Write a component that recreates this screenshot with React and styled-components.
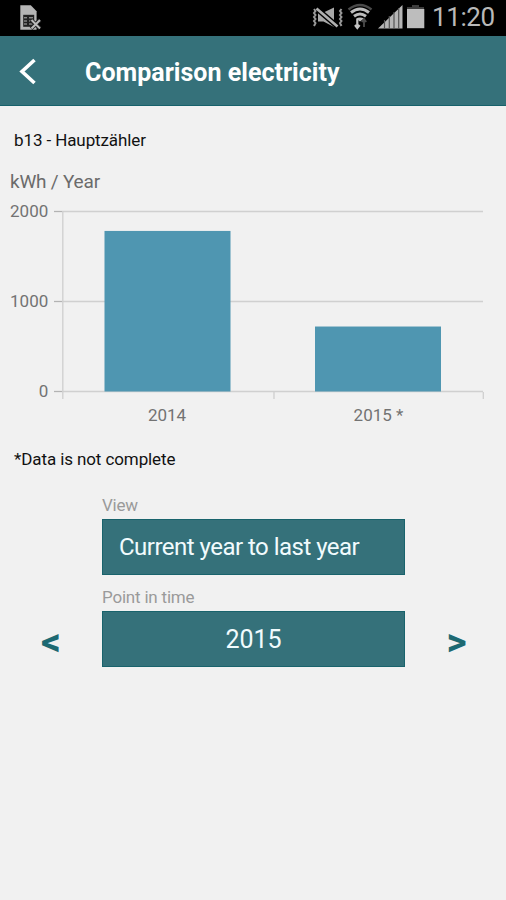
import styled, { createGlobalStyle } from "styled-components"

const GlobalStyle = createGlobalStyle`
* {
  box-sizing: border-box;
}
body {
  margin: 0;
  background: #f1f1f1;
  font-family: Roboto, "Liberation Sans", sans-serif;
}
`
const Container = styled.div`
width: 100%;
min-height: 100vh;
overflow: hidden;
background: #f1f1f1;
`
const StatusBar = styled.div`
height: 36px;
background: #000;
display: flex;
align-items: flex-start;
justify-content: space-between;
padding-right: 12px;
`
const StatusRight = styled.div`
display: flex;
`
const Clock = styled.span`
width: 62px;
color: #b9b9b9;
font-size: 26px;
line-height: 35px;
letter-spacing: -.4px;
white-space: nowrap;
`
const Header = styled.header`
height: 70px;
background: #35717a;
border-bottom: 1px solid #17616b;
display: flex;
align-items: center;
`
const Back = styled.button`
width: 85px;
height: 69px;
padding: 0;
border: none;
background: transparent;
`
const Title = styled.h1`
margin: 5px 0 0;
color: #fff;
font-size: 25px;
font-weight: 700;
line-height: 30px;
letter-spacing: .02px;
`
const Meter = styled.p`
margin: 24px 0 0 14px;
color: #111;
font-size: 17px;
line-height: 20px;
letter-spacing: -.1px;
`
const Unit = styled.p`
margin: 22px 0 0 10px;
color: #6b6b6b;
font-size: 19px;
line-height: 20px;
letter-spacing: -.2px;
`
const Chart = styled.svg`
display: block;
margin-top: 3px;
`
const Label = styled.text`
fill: #737373;
font-size: 17px;
letter-spacing: ${(props) => props.$spacing || "0"};
`
const Note = styled(Meter)`
margin-top: 14px;
`
const Controls = styled.div`
margin-top: 26px;
`
const Field = styled.div`
margin-bottom: 12px;
`
const FieldLabel = styled.div`
margin-left: 102px;
height: 24px;
color: #9a9a9a;
font-size: 17px;
line-height: 20px;
letter-spacing: -.2px;
`
const Row = styled.div`
display: grid;
grid-template-columns: 102px 303px 101px;
`
const Select = styled.button`
grid-column: 2;
height: 56px;
padding: 0 16px;
border: 1px solid #19636c;
background: #35717a;
color: #f1fbfd;
font-family: inherit;
font-size: ${(props) => props.$size};
letter-spacing: ${(props) => props.$spacing || "0"};
text-align: ${(props) => props.$align || "left"};
`
const Arrow = styled.button`
padding: ${(props) => props.$next ? "6px 0 0 2px" : "6px 0 0"};
border: none;
background: transparent;
color: #1d6972;
font-family: inherit;
font-size: 39px;
font-weight: 700;
line-height: 48px;
`

const bars = [
  { label: "2014", value: 1784, x: 104.5, center: 167 },
  { label: "2015 *", value: 722, x: 315, center: 378.5 },
]
const ticks = [2000, 1000, 0]
const yOf = (value) => 196.5 - value * 0.09

const SimIcon = () => (
  <svg width="50" height="36" viewBox="0 0 50 36">
    <path d="M20.3 5.3h10.5l5.8 6v18.5H20.3z" fill="#b5b5b5" />
    <rect x="23.2" y="14.8" width="11" height="12" fill="#222" />
    <path d="M24 17.8h3m2 0h4M24 21h3m2 0h4M24 24h3m2 0h4" stroke="#b5b5b5" strokeWidth="1" />
    <path d="M31 20l9 8.5m0-8.5l-9 8.5" stroke="#222" strokeWidth="4" />
    <path d="M31.5 20l8.5 8.5m0-8.5l-8.5 8.5" stroke="#bcbcbc" strokeWidth="2" />
  </svg>
)

const StatusIcons = () => (
  <svg width="120" height="36" viewBox="312 0 120 36">
    <path d="M318 12.500h5.500l10.500-5v19.500l-10.500-5.500h-5.500z" fill="#a9a9a9" />
    <path d="M316 8l22 19" stroke="#000" strokeWidth="5.500" />
    <path d="M316.500 8.500l21 18" stroke="#b0b0b0" strokeWidth="2.600" />
    <path d="M314 9l1.500 2-1.500 2 1.500 2-1.500 2 1.500 2-1.500 2 1.500 2-1.500 3M341.500 9l-1.500 2 1.500 2-1.500 2 1.500 2-1.500 2 1.500 2-1.500 2 1.500 3" fill="none" stroke="#999" strokeWidth="2" />
    <path d="M348.500 9.500q11.500-9 23 0" fill="none" stroke="#4a4a4a" strokeWidth="2.400" />
    <path d="M351 12.500q9-7 18 0M354 16.200q6-4.500 12 0" fill="none" stroke="#bdbdbd" strokeWidth="3" />
    <path d="M356 18.500q4-2 8 0l-4 3z" fill="#bdbdbd" />
    <path d="M357.300 19v9M355 25l2.300 3 2.300-3" fill="none" stroke="#c4c4c4" strokeWidth="2.200" />
    <path d="M364 27v-8m-2.200 3l2.200-3 2.200 3" fill="none" stroke="#4c4c4c" strokeWidth="1.800" />
    <path d="M378 28.500L402.500 5v23.500z" fill="#b6b6b6" />
    <path d="M384.500 20v9M389.300 16v13M394 12v17M398.700 8v21" stroke="#555" strokeWidth="1.200" />
    <path d="M412 5h7v2h5v4h-17V7h5z" fill="#3d3d3d" />
    <path d="M407 9h17.300v19.200H407z" fill="#bdbdbd" />
  </svg>
)

const YearChart = () => (
  <Chart width="506" height="240" viewBox="0 0 506 240">
    {ticks.map((tick) => (
      <g key={tick}>
        <path d={`M62 ${yOf(tick)}H483`} stroke="#d0d0d0" strokeWidth="1.300" />
        <path d={`M54 ${yOf(tick)}h8`} stroke="#b3b3b3" strokeWidth="1.300" />
        <Label x="48.500" y={yOf(tick) + 5.500} textAnchor="end" $spacing=".1px">{tick}</Label>
      </g>
    ))}
    <path d="M62.800 16V204M274 197v7M483.300 197v7" stroke="#cfcfcf" strokeWidth="1.300" />
    {bars.map((bar) => (
      <g key={bar.label}>
        <rect x={bar.x} y={yOf(bar.value)} width="126" height={bar.value * 0.09} fill="#4f96b1" />
        <Label x={bar.center} y="226" textAnchor="middle">{bar.label}</Label>
      </g>
    ))}
  </Chart>
)

const App = () => {
  return (
    <Container>
      <GlobalStyle />
      <StatusBar>
        <SimIcon />
        <StatusRight>
          <StatusIcons />
          <Clock>11:20</Clock>
        </StatusRight>
      </StatusBar>
      <Header>
        <Back aria-label="Back">
          <svg width="85" height="69" viewBox="0 0 85 69">
            <path d="M34.500 24L22 35.500l12.500 11.500" fill="none" stroke="#fff" strokeWidth="3.600" />
          </svg>
        </Back>
        <Title>Comparison electricity</Title>
      </Header>
      <Meter>b13 - Hauptzähler</Meter>
      <Unit>kWh / Year</Unit>
      <YearChart />
      <Note>*Data is not complete</Note>
      <Controls>
        <Field>
          <FieldLabel>View</FieldLabel>
          <Row>
            <Select $size="24px" $spacing="-.52px">Current year to last year</Select>
          </Row>
        </Field>
        <Field>
          <FieldLabel>Point in time</FieldLabel>
          <Row>
            <Arrow>&lt;</Arrow>
            <Select $size="25px" $align="center">2015</Select>
            <Arrow $next>&gt;</Arrow>
          </Row>
        </Field>
      </Controls>
    </Container>
  )
}

export default App
